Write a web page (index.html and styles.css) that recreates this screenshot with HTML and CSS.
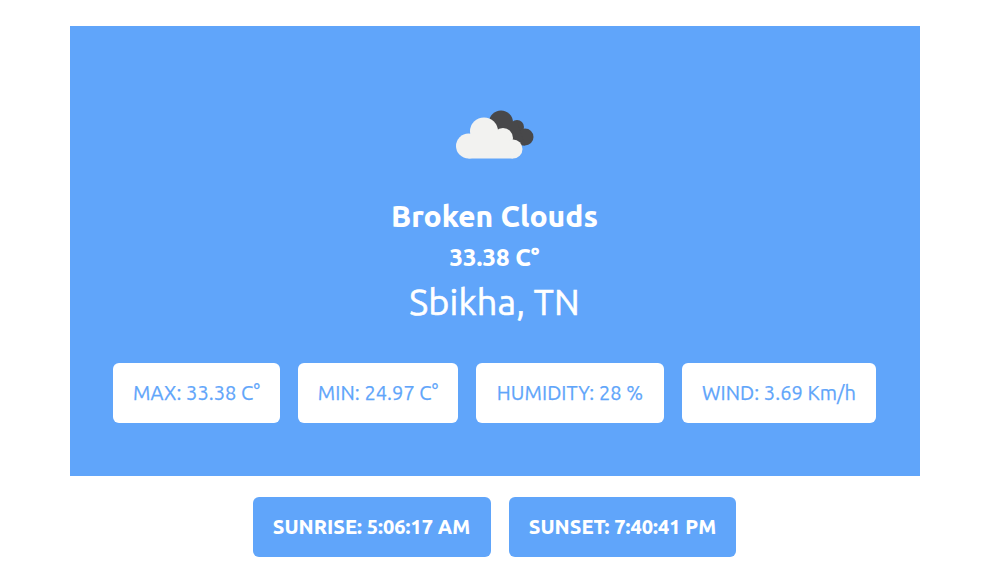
FILE: index.html
```html
<!DOCTYPE html>
<html lang="en">
<head>
<meta charset="utf-8">
<title>Weather</title>
<link rel="stylesheet" href="styles.css">
</head>
<body>
<main class="weather">
  <section class="panel">
    <svg class="icon" viewBox="0 0 100 70" width="100" height="70" aria-hidden="true">
      <g fill="#48484a"><circle cx="56" cy="22.500" r="12"/><circle cx="72" cy="27" r="7"/><circle cx="80" cy="37" r="8.500"/><path d="M50 22h22l8 23.500H58z"/></g>
      <g fill="#f2f2f0"><circle cx="23.500" cy="46" r="12.500"/><circle cx="39" cy="31.500" r="14"/><circle cx="58" cy="38" r="10"/><circle cx="68" cy="49" r="9.500"/><path d="M23.500 34h34L68 58.500H23.500z"/></g>
    </svg>
    <h1 class="condition">Broken Clouds</h1>
    <p class="temperature">33.38 C°</p>
    <p class="place">Sbikha, TN</p>
    <div class="stats">
      <div class="stat stat-max">MAX: 33.38 C°</div>
      <div class="stat stat-min">MIN: 24.97 C°</div>
      <div class="stat stat-humidity">HUMIDITY: 28 %</div>
      <div class="stat stat-wind">WIND: 3.69 Km/h</div>
    </div>
  </section>
  <section class="sun">
    <div class="time sunrise">SUNRISE: 5:06:17 AM</div>
    <div class="time sunset">SUNSET: 7:40:41 PM</div>
  </section>
</main>
</body>
</html>
```
FILE: styles.css
```css
* { box-sizing: border-box; margin: 0; }
body { background: #fff; font-family: Ubuntu, "Noto Sans", sans-serif; }
.weather { width: 850px; margin: 26px 0 0 70px; }
.panel { height: 450px; padding-top: 74px; background: #60a5fa; color: #fff; display: flex; flex-direction: column; align-items: center; }
.icon { display: block; }
.condition { margin-top: 26px; padding-right: 1px; font-size: 30px; line-height: 40px; font-weight: 800; }
.temperature { margin-top: 4px; padding-right: 1px; font-size: 24px; line-height: 36px; font-weight: 800; }
.place { margin-top: 6px; padding-right: 1px; font-size: 36px; line-height: 40px; font-weight: 400; letter-spacing: .2px; -webkit-text-stroke: .6px currentColor; }
.stats, .sun { display: flex; justify-content: center; gap: 18px; padding-right: 2px; white-space: nowrap; }
.stats { margin-top: 41px; color: #60a5fa; font-size: 20px; font-weight: 400; letter-spacing: .06px; -webkit-text-stroke: .25px currentColor; }
.stat, .time { height: 60px; padding: 0 0 2px 1px; display: flex; align-items: center; justify-content: center; border-radius: 6px; }
.stat { background: #fff; }
.stat-max { width: 167px; }
.stat-min { width: 160px; }
.stat-humidity { width: 188px; }
.stat-wind { width: 194px; }
.sun { margin-top: 21px; color: #fff; font-size: 20px; font-weight: 800; }
.time { background: #60a5fa; }
.sunrise { width: 238px; padding-left: 0; }
.sunset { width: 227px; }
```
